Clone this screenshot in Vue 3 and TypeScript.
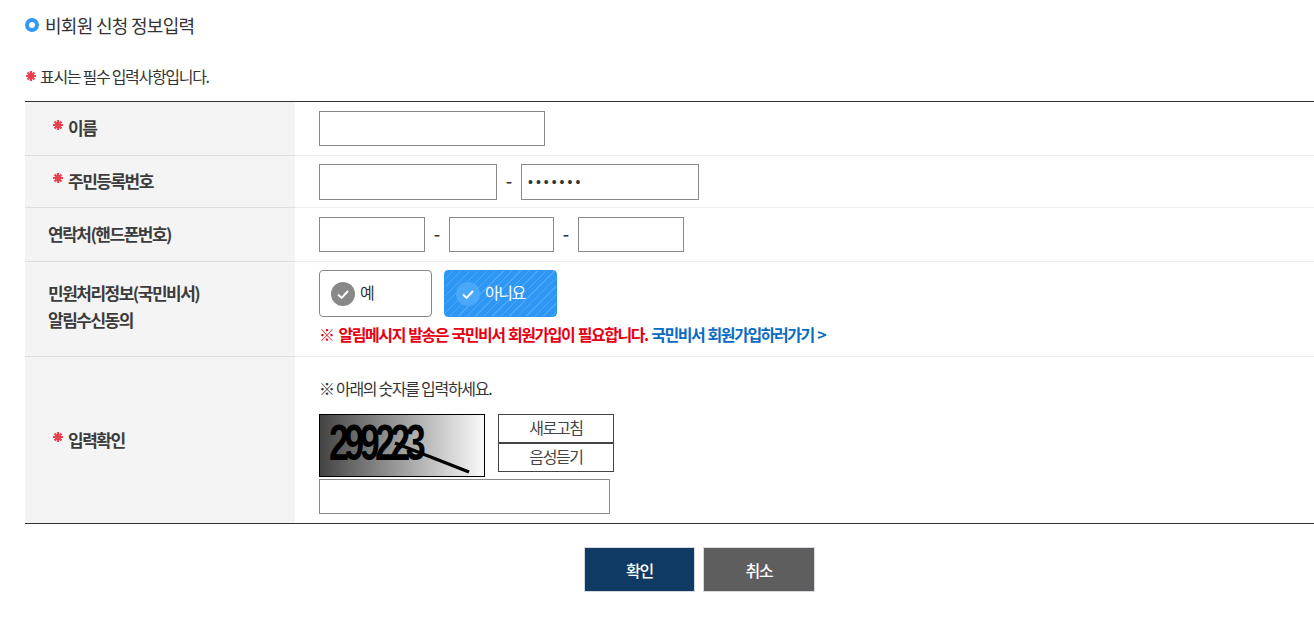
<script setup lang="ts">
const dots = '•••••••'
</script>

<template>
  <main class="page">
    <h2 class="title"><span class="ring"></span>비회원 신청 정보입력</h2>
    <p class="note">
      <svg class="star" viewBox="0 0 12 12" width="12" height="12"><path d="M6 1v10M1 6h10M2.5 2.5l7 7M9.5 2.5l-7 7" /></svg>
      표시는 필수 입력사항입니다.
    </p>
    <section class="form">
      <div class="row r1">
        <div class="th req">
          <svg class="star" viewBox="0 0 12 12" width="12" height="12"><path d="M6 1v10M1 6h10M2.5 2.5l7 7M9.5 2.5l-7 7" /></svg>
          이름
        </div>
        <div class="td"><div class="input w226"></div></div>
      </div>
      <div class="row r2">
        <div class="th req">
          <svg class="star" viewBox="0 0 12 12" width="12" height="12"><path d="M6 1v10M1 6h10M2.5 2.5l7 7M9.5 2.5l-7 7" /></svg>
          주민등록번호
        </div>
        <div class="td">
          <div class="input w178"></div><span class="dash">-</span>
          <div class="input w178 pw">{{ dots }}</div>
        </div>
      </div>
      <div class="row r3">
        <div class="th">연락처(핸드폰번호)</div>
        <div class="td">
          <div class="input w106"></div><span class="dash">-</span>
          <div class="input w105"></div><span class="dash">-</span>
          <div class="input w106"></div>
        </div>
      </div>
      <div class="row r4">
        <div class="th multi">민원처리정보(국민비서)<br />알림수신동의</div>
        <div class="td col">
          <div class="radios">
            <div class="radio">
              <svg viewBox="0 0 24 24" width="24" height="24"><circle cx="12" cy="12" r="12" fill="#888" /><path d="M7 12.5l3.6 3.4L17 9" fill="none" stroke="#fff" stroke-width="2" /></svg>
              <span>예</span>
            </div>
            <div class="radio on">
              <svg viewBox="0 0 24 24" width="24" height="24"><circle cx="12" cy="12" r="12" fill="#4aa8fb" /><path d="M7 12.5l3.6 3.4L17 9" fill="none" stroke="#fff" stroke-width="2" /></svg>
              <span>아니요</span>
            </div>
          </div>
          <p class="warn"><b class="red"><span class="mark">※</span>알림메시지 발송은 국민비서 회원가입이 필요합니다.</b> <b class="blue">국민비서 회원가입하러가기 &gt;</b></p>
        </div>
      </div>
      <div class="row r5">
        <div class="th req">
          <svg class="star" viewBox="0 0 12 12" width="12" height="12"><path d="M6 1v10M1 6h10M2.5 2.5l7 7M9.5 2.5l-7 7" /></svg>
          입력확인
        </div>
        <div class="td col">
          <p class="hint">※ 아래의 숫자를 입력하세요.</p>
          <div class="captcha-row">
            <div class="captcha">
              <span class="digits">299223</span>
              <svg class="scratch" viewBox="0 0 164 61" width="164" height="61"><path d="M75 28l74 29" stroke="#000" stroke-width="3.4" fill="none" /></svg>
            </div>
            <div class="cap-btns">
              <div class="cap-btn">새로고침</div>
              <div class="cap-btn">음성듣기</div>
            </div>
          </div>
          <div class="input w291"></div>
        </div>
      </div>
    </section>
    <div class="actions">
      <button class="btn ok" type="button">확인</button>
      <button class="btn cancel" type="button">취소</button>
    </div>
  </main>
</template>

<style>
html, body { margin: 0; background: #fff; overflow: hidden; }
</style>

<style scoped>
.page {
  box-sizing: border-box;
  width: 1314px;
  height: 623px;
  padding-left: 25px;
  font-family: "Noto Sans CJK KR", "Noto Sans", sans-serif;
  color: #333;
  letter-spacing: -1px;
  overflow: hidden;
}
.title {
  display: flex;
  align-items: center;
  gap: 6px;
  height: 26px;
  margin: 0;
  padding-top: 12px;
  font-size: 18px;
  font-weight: 400;
  line-height: 26px;
  color: #333;
  letter-spacing: -0.7px;
}
.ring {
  box-sizing: border-box;
  width: 14px;
  height: 14px;
  border: 4px solid #2f9bf4;
  border-radius: 50%;
}
.note {
  display: flex;
  align-items: center;
  height: 24px;
  margin: 26px 0 0;
  font-size: 16px;
  line-height: 24px;
  color: #333;
  letter-spacing: -1.3px;
}
.star {
  flex: none;
  fill: none;
  stroke: #e8404e;
  stroke-width: 2.2;
}
.note .star { margin-right: 3px; }
.form {
  margin-top: 13px;
  border-top: 1px solid #333;
  border-bottom: 1px solid #333;
}
.row {
  display: grid;
  grid-template-columns: 270px 1fr;
  box-sizing: border-box;
}
.row + .row .th { border-top: 1px solid #ddd; }
.row + .row .td { border-top: 1px solid #eee; }
.r1 { height: 53px; }
.r2 { height: 52px; }
.r3 { height: 54px; }
.r4 { height: 95px; }
.r5 { height: 167px; }
.th {
  display: flex;
  align-items: center;
  box-sizing: border-box;
  padding-left: 23px;
  padding-bottom: 2px;
  background: #f4f4f4;
  font-size: 17px;
  font-weight: 700;
  color: #3c3c3c;
  letter-spacing: -1.5px;
}
.th.req { padding-left: 27px; }
.th .star { margin: -5px 4px 0 0; }
.th.multi { line-height: 27px; padding-bottom: 7px; }
.td {
  display: flex;
  align-items: center;
  box-sizing: border-box;
  padding-left: 24px;
}
.td.col { flex-direction: column; align-items: flex-start; }
.input {
  box-sizing: border-box;
  height: 35px;
  border: 1px solid #8a8a8a;
  background: #fff;
}
.r2 .input { height: 36px; }
.w226 { width: 226px; }
.w178 { width: 178px; }
.w106 { width: 106px; }
.w105 { width: 105px; }
.w291 { width: 291px; margin-top: 2px; }
.pw {
  padding-left: 6px;
  font-family: "Liberation Sans", sans-serif;
  font-size: 14px;
  line-height: 35px;
  letter-spacing: 3px;
  color: #333;
}
.dash {
  width: 24px;
  margin-bottom: 4px;
  text-align: center;
  font-size: 18px;
  font-weight: 500;
  color: #333;
  letter-spacing: 0;
}
.radios { display: flex; gap: 12px; padding-top: 8px; }
.radio {
  display: flex;
  align-items: flex-start;
  gap: 5px;
  box-sizing: border-box;
  width: 113px;
  height: 47px;
  padding: 11px 0 0 11px;
  border: 1px solid #888;
  border-radius: 4px;
  font-size: 16px;
  line-height: 20px;
  letter-spacing: -1.5px;
  color: #333;
}
.radio svg { flex: none; }
.radio.on {
  border-color: #2d97f3;
  color: #fff;
  background: repeating-linear-gradient(135deg, #2d97f3 0 5px, #4ba8f7 5px 6px);
}
.warn {
  margin: 5px 0 0;
  font-size: 16px;
  line-height: 24px;
  letter-spacing: -1.45px;
  word-spacing: 1.2px;
  white-space: nowrap;
}
.warn b { font-weight: 700; }
.red { color: #e60012; }
.blue { color: #0a6bc4; }
.mark { margin-right: 5px; }
.hint {
  margin: 19px 0 0;
  font-size: 16px;
  line-height: 24px;
  letter-spacing: -1.3px;
  color: #333;
}
.captcha-row { display: flex; gap: 13px; margin-top: 14px; }
.captcha {
  position: relative;
  box-sizing: border-box;
  width: 166px;
  height: 63px;
  border: 1px solid #000;
  background: linear-gradient(90deg, #444, #fafafa);
  overflow: hidden;
}
.digits {
  position: absolute;
  left: 9px;
  top: -2px;
  font-family: "Liberation Sans", sans-serif;
  font-size: 50px;
  font-weight: 700;
  line-height: 60px;
  letter-spacing: -6.5px;
  color: #000;
  transform: scaleX(0.72);
  transform-origin: left top;
}
.scratch { position: absolute; left: 0; top: 0; }
.cap-btns { display: flex; flex-direction: column; }
.cap-btn {
  box-sizing: border-box;
  width: 116px;
  height: 29px;
  border: 1px solid #444;
  background: #fff;
  font-size: 16px;
  line-height: 24px;
  letter-spacing: -1.4px;
  text-align: center;
  color: #444;
}
.actions {
  display: flex;
  justify-content: center;
  gap: 8px;
  padding: 23px 0 0;
  margin-left: 60px;
}
.btn {
  box-sizing: border-box;
  width: 111px;
  height: 45px;
  padding: 0;
  border: 1px solid #d5d8dc;
  font-family: inherit;
  font-size: 16px;
  font-weight: 500;
  letter-spacing: -1.3px;
  color: #fff;
}
.ok { background: #0f3a63; }
.cancel { width: 112px; background: #5e5e5e; }
</style>
